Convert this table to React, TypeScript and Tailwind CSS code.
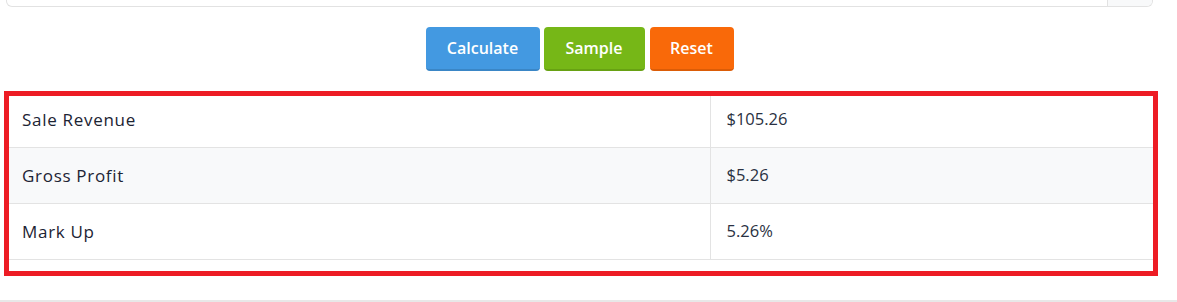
import React from "react";

const rows = [
  { label: "Sale Revenue", value: "$105.26" },
  { label: "Gross Profit", value: "$5.26" },
  { label: "Mark Up", value: "5.26%" },
];

export default function App() {
  return (
    <div className="relative w-[1177px] h-[302px] bg-white overflow-hidden" style={{ fontFamily: "'Open Sans', 'Noto Sans', sans-serif" }}>
      <div className="px-[6px] w-[1159px]">
        {/* bottom of input group */}
        <div className="flex h-[7px] border-x border-b border-[#e2e2e2] rounded-b-[6px] overflow-hidden">
          <div className="flex-1" />
          <div className="w-[45px] border-l border-[#e2e2e2] bg-[#f8f9fa]" />
        </div>

        {/* buttons */}
        <div className="flex justify-center gap-[4px] mt-[20px]">
          <button className="w-[114px] h-[44px] rounded-[4px] bg-[#4399e1] border-b-2 border-[#3a86c6] text-white text-[16px] font-semibold">
            Calculate
          </button>
          <button className="w-[101px] h-[44px] rounded-[4px] bg-[#76b717] border-b-2 border-[#67a113] text-white text-[16px] font-semibold">
            Sample
          </button>
          <button className="ml-[1px] w-[84px] h-[44px] rounded-[4px] bg-[#f96909] border-b-2 border-[#db5c07] text-white text-[16px] font-semibold">
            Reset
          </button>
        </div>

        {/* results table */}
        <table className="mt-[20px] w-full border-collapse" style={{ fontFamily: "'Open Sans', sans-serif" }}>
          <tbody>
            {rows.map((r, i) => (
              <tr key={r.label} className={i === 1 ? "bg-[#f8f9fa]" : "bg-white"}>
                <td className="w-[704px] h-[56px] pl-[16px] border-y border-r border-[#e3e3e3] text-[#1c2333] text-[17px] tracking-[0.7px] font-medium">
                  {r.label}
                </td>
                <td className="h-[56px] pl-[16px] border-y border-[#e3e3e3] text-[#2a3142] text-[16.5px] font-normal">
                  {r.value}
                </td>
              </tr>
            ))}
          </tbody>
        </table>
      </div>

      {/* red highlight overlay */}
      <div className="absolute left-[4px] top-[91px] w-[1154px] h-[185px] border-[5px] border-[#ed1c24] pointer-events-none" />

      {/* bottom separator */}
      <div className="absolute left-0 right-0 top-[300px] h-[2px] bg-[#e8e8e8]" />
    </div>
  );
}
